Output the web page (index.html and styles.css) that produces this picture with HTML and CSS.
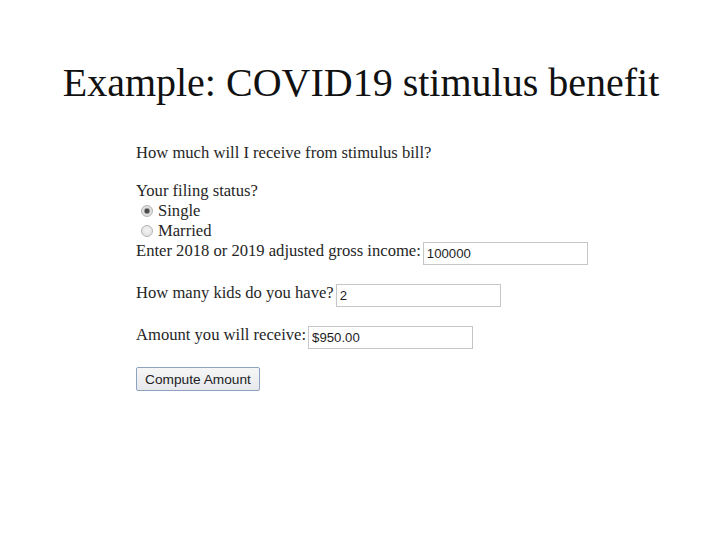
FILE: index.html
```html
<!DOCTYPE html>
<html lang="en">
<head>
<meta charset="utf-8">
<title>Example: COVID19 stimulus benefit</title>
<link rel="stylesheet" href="styles.css">
</head>
<body>
<main class="slide">
  <h1 class="title">Example: COVID19 stimulus benefit</h1>
  <form class="form">
    <p class="line heading">How much will I receive from stimulus bill?</p>
    <p class="line status">Your filing status?</p>
    <label class="line radio-row"><input class="radio" type="radio" name="status" checked><span>Single</span></label>
    <label class="line radio-row"><input class="radio" type="radio" name="status"><span>Married</span></label>
    <div class="field first">
      <span class="field-label">Enter 2018 or 2019 adjusted gross income:</span>
      <input class="text-input" type="text" value="100000">
    </div>
    <div class="field">
      <span class="field-label">How many kids do you have?</span>
      <input class="text-input" type="text" value="2">
    </div>
    <div class="field">
      <span class="field-label">Amount you will receive:</span>
      <input class="text-input" type="text" value="$950.00">
    </div>
    <button class="compute" type="button">Compute Amount</button>
  </form>
</main>
</body>
</html>
```

FILE: styles.css
```css
html, body {
  margin: 0;
  padding: 0;
  background: #ffffff;
}

body {
  font-family: "Liberation Serif", "Times New Roman", serif;
  color: #000000;
  width: 720px;
  height: 540px;
  overflow: hidden;
}

.slide {
  display: flex;
  flex-direction: column;
}

.title {
  margin: 0;
  padding: 60px 0 0 2px;
  font-size: 40px;
  line-height: 46px;
  font-weight: normal;
  text-align: center;
  color: #111111;
}

.form {
  display: flex;
  flex-direction: column;
  align-items: flex-start;
  margin: 37px 0 0 136px;
  font-size: 16.6px;
  color: #262626;
}

.line {
  margin: 0;
  line-height: 20px;
  height: 20px;
}

.status {
  margin-top: 18px;
}

.radio-row {
  display: flex;
  align-items: center;
}

.radio {
  appearance: none;
  -webkit-appearance: none;
  box-sizing: border-box;
  width: 12px;
  height: 12px;
  margin: 0 5px 0 5px;
  border-radius: 50%;
  border: 1px solid #b4b4b4;
  background: radial-gradient(circle at 50% 40%, #f4f4f4 0%, #dcdcdc 100%);
}

.radio:checked {
  background: radial-gradient(circle, #4a4a4a 0 2px, #9a9a9a 2.6px, #e2e2e2 3.6px, #d4d4d4 100%);
}

.field {
  display: flex;
  align-items: flex-start;
  gap: 2px;
  margin-top: 19px;
  height: 23px;
}

.field.first {
  margin-top: 1px;
}

.field-label {
  line-height: 16px;
  margin-top: 1px;
  white-space: nowrap;
}

.text-input {
  box-sizing: border-box;
  width: 165px;
  height: 23px;
  margin: 0;
  padding: 0 2px 0 3px;
  border: 1px solid #c6c6c6;
  font-family: "Liberation Sans", Arial, sans-serif;
  font-size: 13.2px;
  color: #1e1e1e;
  background: #ffffff;
  outline: none;
}

.compute {
  box-sizing: border-box;
  width: 124px;
  height: 24px;
  margin-top: 18px;
  padding: 0;
  border: 1px solid #8ea3c2;
  border-radius: 2px;
  background: linear-gradient(#f6f6f6, #e6e8ec);
  font-family: "Liberation Sans", Arial, sans-serif;
  font-size: 13.7px;
  color: #222222;
}
```
